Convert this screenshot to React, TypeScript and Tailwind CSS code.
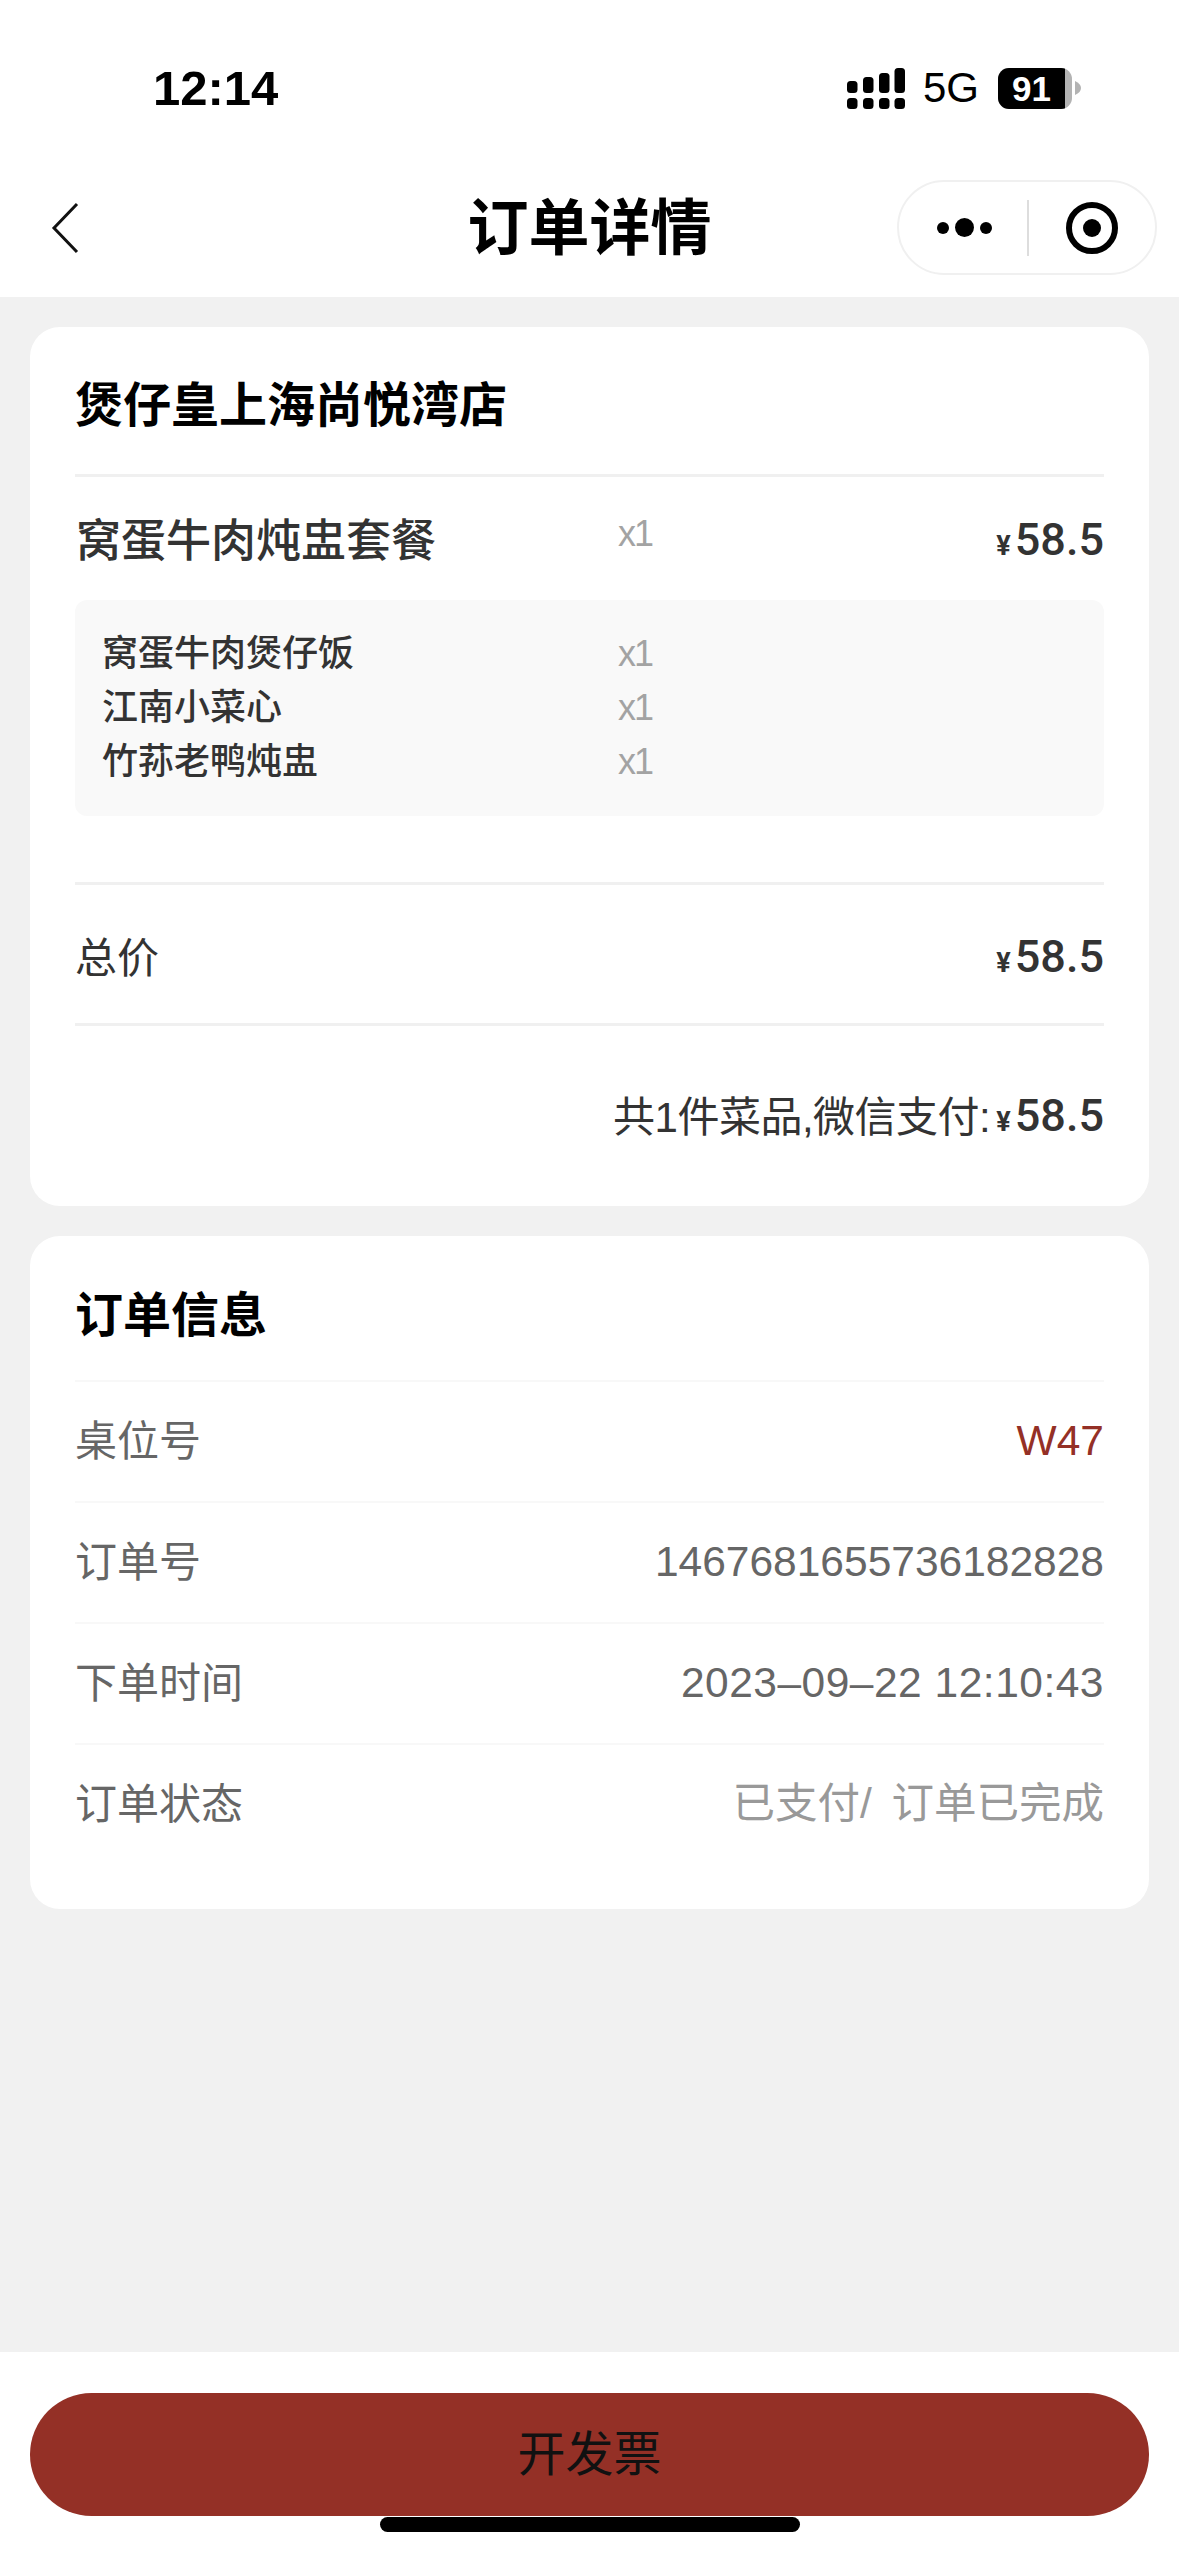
import React from 'react';

const subItems = ['窝蛋牛肉煲仔饭', '江南小菜心', '竹荪老鸭炖盅'];

const infoRows = [
    { label: '桌位号', value: 'W47', color: 'text-[#943026]' },
    { label: '订单号', value: '1467681655736182828', color: 'text-[#666666]' },
    { label: '下单时间', value: '2023–09–22 12:10:43', color: 'text-[#666666] tracking-[0.5px]' },
    { label: '订单状态', value: '已支付/ 订单已完成', color: 'text-[#999999] [word-spacing:8px]' },
];

function Price() {
    return (
        <span className="flex items-baseline text-[#333333] font-medium font-[Roboto]">
            <span className="text-[27px] font-bold mr-[4px]">¥</span>
            <span className="text-[45px] leading-none">58.5</span>
        </span>
    );
}

function SignalIcon() {
    return (
        <svg width="58" height="41" viewBox="0 0 58 41" fill="black">
            <rect x="0" y="30" width="10.5" height="11" rx="3.5" />
            <rect x="16" y="30" width="10.5" height="11" rx="3.5" />
            <rect x="32" y="30" width="10.5" height="11" rx="3.5" />
            <rect x="47.5" y="30" width="10.5" height="11" rx="3.5" />
            <rect x="0" y="13" width="10.5" height="12" rx="3.5" />
            <rect x="16" y="9" width="10.5" height="16" rx="3.5" />
            <rect x="32" y="5" width="10.5" height="20" rx="3.5" />
            <rect x="47.5" y="0" width="10.5" height="25" rx="3.5" />
        </svg>
    );
}

function Battery() {
    return (
        <div className="flex items-center">
            <div className="w-[74px] h-[41px] rounded-[11px] overflow-hidden flex bg-[#b3b3b3]">
                <div className="w-[67px] h-full bg-black flex items-center justify-center text-white text-[35px] font-bold leading-none">
                    91
                </div>
            </div>
            <svg width="8" height="14" viewBox="0 0 8 14" className="ml-[1px]">
                <path d="M2 0 C6 2 8 4 8 7 C8 10 6 12 2 14 Z" fill="#b3b3b3" />
            </svg>
        </div>
    );
}

export default function App() {
    return (
        <div
            className="w-[1179px] h-[2556px] flex flex-col bg-[#f1f1f1] overflow-hidden"
            style={{ fontFamily: '"Liberation Sans", "Noto Sans CJK SC", sans-serif' }}
        >
            <header className="bg-white h-[297px] shrink-0">
                <div className="h-[176px] pl-[153px] pr-[98px] flex items-center justify-between">
                    <span className="text-[49px] font-bold text-black leading-none">12:14</span>
                    <div className="flex items-center">
                        <SignalIcon />
                        <span className="text-[42px] leading-none text-black ml-[18px] mr-[19px]">5G</span>
                        <Battery />
                    </div>
                </div>
                <div className="mt-[4px] h-[95px] px-[22px] grid grid-cols-[1fr_auto_1fr] items-center">
                    <svg width="28" height="52" viewBox="0 0 28 52" fill="none" stroke="#111111" strokeWidth="3" className="ml-[29px]">
                        <path d="M26 2 L3 26 L26 50" />
                    </svg>
                    <h1 className="text-[61px] font-semibold text-black leading-none pt-[3px]">订单详情</h1>
                    <div className="justify-self-end w-[260px] h-[95px] rounded-full border-2 border-[#f0f0f0] flex items-center">
                        <div className="flex-1 flex items-center justify-center gap-[6px] pl-[2px]">
                            <span className="w-[12px] h-[12px] rounded-full bg-black" />
                            <span className="w-[19px] h-[19px] rounded-full bg-black" />
                            <span className="w-[12px] h-[12px] rounded-full bg-black" />
                        </div>
                        <div className="w-[2px] h-[56px] bg-[#dddddd]" />
                        <div className="flex-1 flex items-center justify-center">
                            <svg width="52" height="52" viewBox="0 0 52 52">
                                <circle cx="26" cy="26" r="23" fill="none" stroke="black" strokeWidth="6" />
                                <circle cx="26" cy="26" r="9" fill="black" />
                            </svg>
                        </div>
                    </div>
                </div>
            </header>

            <main className="flex-1 px-[30px] pt-[30px] flex flex-col gap-[30px]">
                <section className="bg-white rounded-[30px] px-[45px]">
                    <div className="h-[147px] flex items-center">
                        <h2 className="text-[48px] font-semibold text-black leading-none pt-[10px]">煲仔皇上海尚悦湾店</h2>
                    </div>
                    <div className="h-[3px] bg-[#f0f0f0]" />
                    <div className="h-[123px] pt-[6px] grid grid-cols-[543px_1fr_auto] items-center">
                        <span className="text-[45px] font-medium text-[#333333] leading-none ml-[1px]">窝蛋牛肉炖盅套餐</span>
                        <span className="text-[36px] tracking-[-2px] text-[#a3a3a3] leading-none -mt-[16px]">x1</span>
                        <Price />
                    </div>
                    <div className="bg-[#f9f9f9] rounded-[12px] px-[28px] py-[27px]">
                        {subItems.map((name) => (
                            <div key={name} className="h-[54px] grid grid-cols-[515px_1fr] items-center">
                                <span className="text-[36px] font-medium text-[#333333] leading-none -ml-[1px]">{name}</span>
                                <span className="text-[36px] tracking-[-2px] text-[#a3a3a3] leading-none">x1</span>
                            </div>
                        ))}
                    </div>
                    <div className="mt-[66px] h-[3px] bg-[#f0f0f0]" />
                    <div className="h-[138px] pt-[9px] flex items-center justify-between">
                        <span className="text-[42px] text-[#333333] leading-none">总价</span>
                        <Price />
                    </div>
                    <div className="h-[3px] bg-[#f0f0f0]" />
                    <div className="h-[180px] pt-[3px] flex items-center justify-end">
                        <span className="text-[42px] tracking-[-0.5px] text-[#333333] leading-none mr-[6px]">共1件菜品,微信支付:</span>
                        <Price />
                    </div>
                </section>

                <section className="bg-white rounded-[30px] px-[45px] pb-[45px]">
                    <div className="h-[144px] pt-[16px] flex items-center">
                        <h2 className="text-[48px] font-bold text-black leading-none">订单信息</h2>
                    </div>
                    {infoRows.map((row) => (
                        <div
                            key={row.label}
                            className="h-[121px] border-t-2 border-[#f8f8f8] flex items-center justify-between"
                        >
                            <span className="text-[42px] text-[#666666] leading-none">{row.label}</span>
                            <span className={`text-[42.5px] leading-none ${row.color}`}>{row.value}</span>
                        </div>
                    ))}
                </section>
            </main>

            <footer className="bg-white h-[204px] shrink-0 px-[30px] pt-[41px] flex flex-col items-center">
                <button className="w-full h-[123px] shrink-0 rounded-full bg-[#943026] text-[48px] text-[#111111] leading-none">
                    开发票
                </button>
                <div className="mt-[1px] w-[420px] h-[15px] shrink-0 rounded-full bg-black" />
            </footer>
        </div>
    );
}
